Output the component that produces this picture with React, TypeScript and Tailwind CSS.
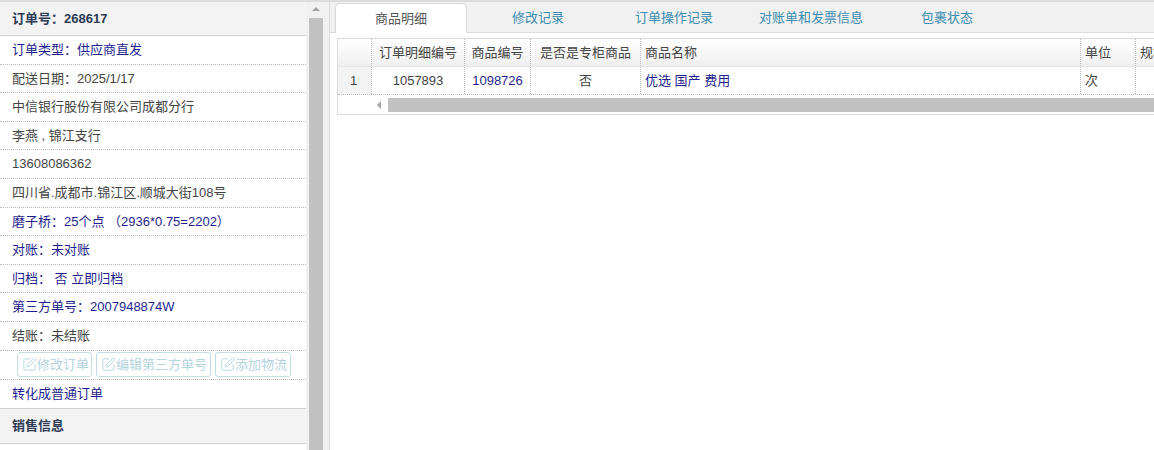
import { SquarePen } from "lucide-react";

const infoRows = [
  { text: "订单类型：供应商直发", link: true },
  { text: "配送日期：2025/1/17" },
  { text: "中信银行股份有限公司成都分行" },
  { text: "李燕 , 锦江支行" },
  { text: "13608086362" },
  { text: "四川省.成都市.锦江区.顺城大街108号" },
  { text: "磨子桥：25个点 （2936*0.75=2202）", link: true },
  { text: "对账：未对账", link: true },
  { text: "归档： 否 立即归档", link: true },
  { text: "第三方单号：2007948874W", link: true },
  { text: "结账：未结账" },
];

const tabs = [
  { label: "修改记录", width: "w-[142px]" },
  { label: "订单操作记录", width: "w-[130px]" },
  { label: "对账单和发票信息", width: "w-[144px]" },
  { label: "包裹状态", width: "w-[128px]" },
];

function ActionButton({ label, width }: { label: string; width: string }) {
  return (
    <button className={`flex h-[25px] items-center rounded-[3px] border border-[#c4dde4] pl-1 text-[13px] text-[#b4d5de] ${width}`}>
      <SquarePen size={15} strokeWidth={1.5} className="shrink-0" />
      <span className="whitespace-nowrap">{label}</span>
    </button>
  );
}

function Sidebar() {
  return (
    <aside className="w-[306px] shrink-0 pt-0.5">
      <div className="flex h-[34px] items-center border-b border-[#cfcfcf] bg-[#f3f3f3] pl-3 text-[13px] font-bold text-[#2b3a55]">
        订单号：268617
      </div>
      {infoRows.map((row) => (
        <div
          key={row.text}
          className={`flex h-[28.6px] items-center whitespace-pre border-b border-dotted border-[#bbb] pl-3 text-[13px] ${
            row.link ? "text-[#1f1f8f]" : "text-[#444]"
          }`}
        >
          {row.text}
        </div>
      ))}
      <div className="flex h-[29px] items-center gap-1 border-b border-dotted border-[#bbb] pl-[17px]">
        <ActionButton label="修改订单" width="w-[75px]" />
        <ActionButton label="编辑第三方单号" width="w-[115px]" />
        <ActionButton label="添加物流" width="w-[76px]" />
      </div>
      <div className="flex h-[28px] items-center pl-3 text-[13px] text-[#1f1f8f]">转化成普通订单</div>
      <div className="flex h-[36px] items-center border-y border-[#cfcfcf] bg-[#f3f3f3] pl-3 text-[13px] font-bold text-[#2b3a55]">
        销售信息
      </div>
    </aside>
  );
}

function VerticalScrollbar() {
  return (
    <div className="flex w-[17px] shrink-0 flex-col bg-[#f1f1f1] pl-[3px]">
      <div className="flex h-[18px] items-center justify-center">
        <div className="h-0 w-0 border-x-[4px] border-b-[4px] border-x-transparent border-b-[#a3a3a3]" />
      </div>
      <div className="flex-1 bg-[#c1c1c1]" />
    </div>
  );
}

function Tabs() {
  return (
    <div className="flex h-[33px] border-y border-y-[#dcdcdc] bg-[#f1f1f1] pl-[5px] pt-0.5 text-[13px]">
      <div className="relative z-10 -mb-px flex w-[132px] items-center justify-center rounded-t-[5px] border border-b-0 border-[#d8d8d8] bg-white text-[#555]">
        商品明细
      </div>
      {tabs.map((tab) => (
        <div key={tab.label} className={`flex items-center justify-center whitespace-nowrap text-[#3a8cb0] ${tab.width}`}>
          {tab.label}
        </div>
      ))}
    </div>
  );
}

function DetailGrid() {
  const headCell = "flex items-center border-l border-dotted border-[#bbb] whitespace-nowrap";
  const bodyCell = "flex items-center border-l border-dotted border-[#bbb] whitespace-nowrap";
  return (
    <div className="ml-[7px] mt-[5px] overflow-hidden border-y border-l border-[#dcdcdc] text-[13px] text-[#444]">
      <div className="grid h-[28px] grid-cols-[33px_93px_66px_110px_440px_55px_100px] border-b border-[#e6e6e6] bg-gradient-to-b from-white to-[#efefef]">
        <div />
        <div className={`${headCell} justify-center`}>订单明细编号</div>
        <div className={`${headCell} justify-center`}>商品编号</div>
        <div className={`${headCell} justify-center`}>是否是专柜商品</div>
        <div className={`${headCell} pl-1`}>商品名称</div>
        <div className={`${headCell} pl-1`}>单位</div>
        <div className={`${headCell} pl-1`}>规格</div>
      </div>
      <div className="grid h-[28px] grid-cols-[33px_93px_66px_110px_440px_55px_100px] border-b border-dotted border-[#bbb]">
        <div className="flex items-center justify-center bg-[#f3f3f3] pr-0.5">1</div>
        <div className={`${bodyCell} justify-center`}>1057893</div>
        <div className={`${bodyCell} justify-center text-[#1f1f8f]`}>1098726</div>
        <div className={`${bodyCell} justify-center`}>否</div>
        <div className={`${bodyCell} pl-1 text-[#1f1f8f]`}>优选 国产 费用</div>
        <div className={`${bodyCell} pl-1`}>次</div>
        <div className={bodyCell} />
      </div>
      <div className="flex h-[19px] items-center pl-[33px]">
        <div className="flex h-full w-[17px] items-center justify-center pr-0.5">
          <div className="h-0 w-0 border-y-[4px] border-r-[4px] border-y-transparent border-r-[#a3a3a3]" />
        </div>
        <div className="h-[14px] flex-1 bg-[#c1c1c1]" />
      </div>
    </div>
  );
}

export default function App() {
  return (
    <div
      className="flex h-[450px] w-[1154px] overflow-hidden border-t-2 border-[#dcdcdc] bg-white"
      style={{ fontFamily: '"Liberation Sans", "Noto Sans CJK SC", sans-serif' }}
    >
      <div className="-mt-0.5 flex shrink-0">
        <Sidebar />
        <VerticalScrollbar />
      </div>
      <div className="-mt-0.5 w-[7px] shrink-0 border-r border-[#dcdcdc] bg-[#f1f1f1]" />
      <main className="-mt-0.5 min-w-0 flex-1">
        <Tabs />
        <DetailGrid />
      </main>
    </div>
  );
}
